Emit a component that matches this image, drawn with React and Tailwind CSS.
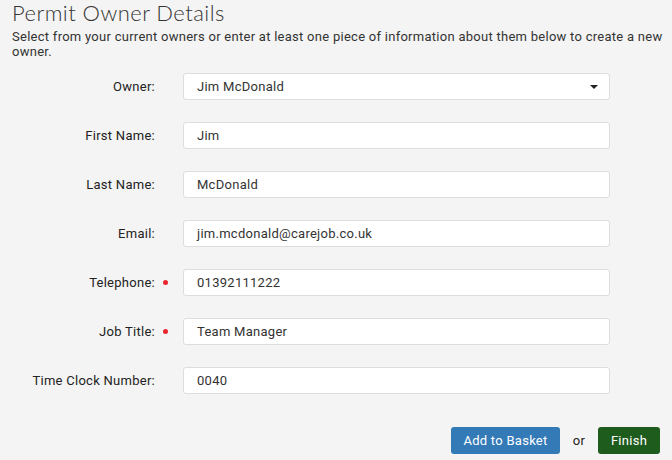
export default function App() {
  const rows = [
    { label: "First Name:", value: "Jim" },
    { label: "Last Name:", value: "McDonald" },
    { label: "Email:", value: "jim.mcdonald@carejob.co.uk" },
    { label: "Telephone:", value: "01392111222", req: true },
    { label: "Job Title:", value: "Team Manager", req: true },
    { label: "Time Clock Number:", value: "0040" },
  ];
  return (
    <div className="w-[672px] h-[460px] bg-[#f4f4f4] overflow-hidden pl-[12px] pt-[1px] text-[#222] tracking-[0.27px]" style={{ fontFamily: "Roboto, 'Liberation Sans', sans-serif" }}>
      <h1 className="text-[22px] leading-[24px] font-light text-[#333] tracking-[0.45px]" style={{ fontFamily: "Lato, 'Noto Sans', sans-serif" }}>Permit Owner Details</h1>
      <p className="text-[13px] leading-[15px] mt-[4px] text-[#333] w-[655px]">
        Select from your current owners or enter at least one piece of information about them below to create a new owner.
      </p>
      <div className="flex flex-col gap-[22px] mt-[14px]">
        <div className="flex items-center h-[27px]">
          <div className="w-[143px] text-right text-[13px]">Owner:</div>
          <div className="w-[28px]" />
          <div className="w-[427px] h-[27px] bg-white border border-[#ddd] rounded-[3px] flex items-center justify-between pl-[13px] pr-[11px] text-[13px] text-[#333]">
            <span>Jim McDonald</span>
            <span className="w-0 h-0 border-l-[4px] border-r-[4px] border-t-[4px] border-l-transparent border-r-transparent border-t-[#222]" />
          </div>
        </div>
        {rows.map((r) => (
          <div key={r.label} className="flex items-center h-[27px]">
            <div className="w-[143px] text-right text-[13px]">{r.label}</div>
            <div className="w-[28px] flex items-center pl-[8px]">
              {r.req && <span className="w-[5px] h-[5px] rounded-full bg-[#e8262b]" />}
            </div>
            <div className="w-[427px] h-[27px] bg-white border border-[#ddd] rounded-[3px] flex items-center pl-[13px] text-[13px] text-[#333]">
              {r.value}
            </div>
          </div>
        ))}
      </div>
      <div className="flex items-center mt-[33px] pl-[439px]">
        <button className="w-[109px] h-[27px] bg-[#337ab7] text-white text-[13px] rounded-[3px]">Add to Basket</button>
        <span className="w-[38px] text-center text-[13px] text-[#222]">or</span>
        <button className="w-[62px] h-[27px] bg-[#1e5c1e] text-white text-[13px] rounded-[3px]">Finish</button>
      </div>
    </div>
  );
}
